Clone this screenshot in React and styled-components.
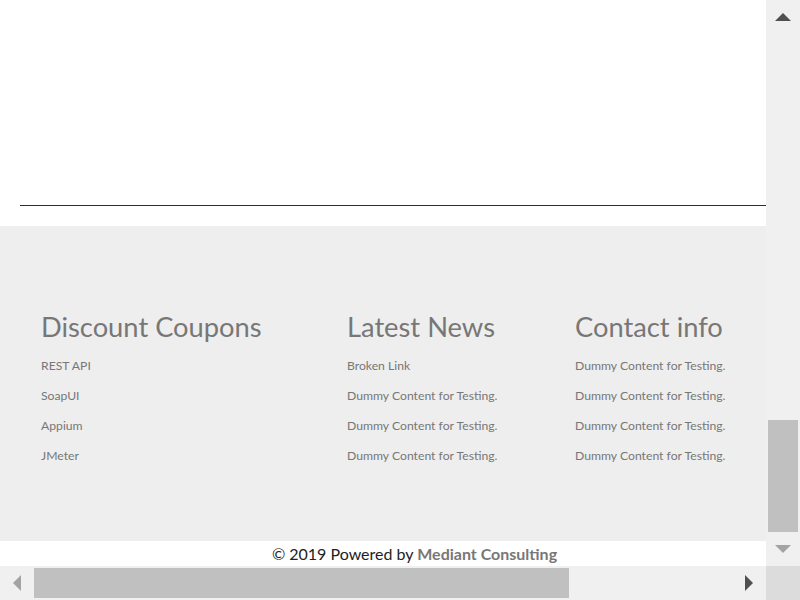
import React from 'react';
import styled, { createGlobalStyle } from 'styled-components';

const Global = createGlobalStyle`
  html, body { margin: 0; padding: 0; overflow: hidden; background: #fff; }
`;

const Frame = styled.div`
  width: 800px;
  height: 600px;
  display: grid;
  grid-template-columns: 766px 34px;
  grid-template-rows: 566px 34px;
  font-family: Lato, "Liberation Sans", sans-serif;
`;

const Viewport = styled.div`
  overflow: hidden;
  background: #fff;
`;

const Page = styled.div`
  width: 829px;
`;

const Hero = styled.div`
  height: 226px;
  box-sizing: border-box;
  padding: 205px 0 0 20px;
`;

const Rule = styled.hr`
  margin: 0;
  border: 0;
  border-top: 1px solid #2e2e2e;
`;

const Footer = styled.footer`
  background: #eeeeee;
  height: 315px;
  box-sizing: border-box;
  padding: 84px 0 0 41px;
  display: grid;
  grid-template-columns: 306px 228px 1fr;
  align-items: start;
`;

const Column = styled.div`
  display: flex;
  flex-direction: column;
`;

const Heading = styled.h3`
  margin: 0 0 7px;
  font-size: 27.3px;
  line-height: 34px;
  font-weight: normal;
  color: #777;
  white-space: nowrap;
`;

const Link = styled.a`
  display: block;
  font-size: 12.2px;
  line-height: 30px;
  color: #777;
  text-decoration: none;
  white-space: nowrap;
`;

const Copyright = styled.div`
  height: 25px;
  background: #fff;
  text-align: center;
  font-size: 16px;
  line-height: 25px;
  color: #222;
`;

const Brand = styled.span`
  color: #777;
  font-weight: bold;
`;

const VBar = styled.div`
  background: #f0f0f0;
  display: flex;
  flex-direction: column;
`;

const HBar = styled.div`
  background: #f0f0f0;
  display: flex;
`;

const ArrowButton = styled.div`
  flex: 0 0 34px;
  height: 34px;
  width: 34px;
  display: flex;
  align-items: center;
  justify-content: center;
`;

const VTrack = styled.div`
  flex: 1;
  display: flex;
  flex-direction: column;
  justify-content: flex-end;
  padding: 0 2px;
`;

const HTrack = styled.div`
  flex: 1;
  display: flex;
  padding: 2px 0;
`;

const Thumb = styled.div`
  background: #c0c0c0;
`;

const Corner = styled.div`
  background: #dcdcdc;
`;

const Arrow = ({ dir, color }) => {
  const pts = {
    up: '0,8 8,0 16,8',
    down: '0,0 16,0 8,8',
    left: '8,0 8,16 0,8',
    right: '0,0 8,8 0,16',
  }[dir];
  const vertical = dir === 'up' || dir === 'down';
  return (
    <svg width={vertical ? 16 : 8} height={vertical ? 8 : 16} viewBox={vertical ? '0 0 16 8' : '0 0 8 16'}>
      <polygon points={pts} fill={color} />
    </svg>
  );
};

const columns = [
  { title: 'Discount Coupons', items: ['REST API', 'SoapUI', 'Appium', 'JMeter'] },
  { title: 'Latest News', items: ['Broken Link', 'Dummy Content for Testing.', 'Dummy Content for Testing.', 'Dummy Content for Testing.'] },
  { title: 'Contact info', items: ['Dummy Content for Testing.', 'Dummy Content for Testing.', 'Dummy Content for Testing.', 'Dummy Content for Testing.'] },
];

export default function App() {
  return (
    <>
      <Global />
      <Frame>
        <Viewport>
          <Page>
            <Hero>
              <Rule />
            </Hero>
            <Footer>
              {columns.map((c) => (
                <Column key={c.title}>
                  <Heading>{c.title}</Heading>
                  {c.items.map((it, i) => (
                    <Link key={i} href="#">{it}</Link>
                  ))}
                </Column>
              ))}
            </Footer>
            <Copyright>
              © 2019 Powered by <Brand>Mediant Consulting</Brand>
            </Copyright>
          </Page>
        </Viewport>
        <VBar>
          <ArrowButton><Arrow dir="up" color="#505050" /></ArrowButton>
          <VTrack>
            <Thumb style={{ height: 112 }} />
          </VTrack>
          <ArrowButton><Arrow dir="down" color="#a3a3a3" /></ArrowButton>
        </VBar>
        <HBar>
          <ArrowButton><Arrow dir="left" color="#a3a3a3" /></ArrowButton>
          <HTrack>
            <Thumb style={{ width: 535 }} />
          </HTrack>
          <ArrowButton><Arrow dir="right" color="#505050" /></ArrowButton>
        </HBar>
        <Corner />
      </Frame>
    </>
  );
}
